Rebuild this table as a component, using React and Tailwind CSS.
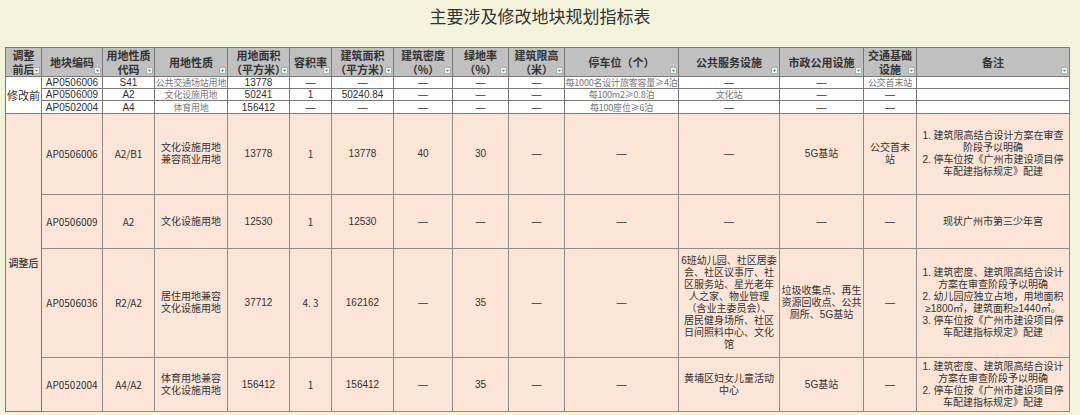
import React from 'react';

const colW = [
  'w-[36px]', 'w-[61px]', 'w-[52px]', 'w-[73px]', 'w-[62px]', 'w-[42px]', 'w-[62px]', 'w-[59px]',
  'w-[56px]', 'w-[56px]', 'w-[114px]', 'w-[101px]', 'w-[84px]', 'w-[53px]', 'w-[153px]',
];

const headers = [
  '调整\n前后', '地块编码', '用地性质\n代码', '用地性质', '用地面积\n（平方米）', '容积率',
  '建筑面积\n（平方米）', '建筑密度\n（%）', '绿地率\n（%）', '建筑限高\n（米）', '停车位（个）',
  '公共服务设施', '市政公用设施', '交通基础\n设施', '备注',
];

const before = [
  ['AP0506006', 'S41', '公共交通场站用地', '13778', '—', '—', '—', '—', '—', '每1000名设计旅客容量≥4泊', '—', '—', '公交首末站', ''],
  ['AP0506009', 'A2', '文化设施用地', '50241', '1', '50240.84', '—', '—', '—', '每100m2≥0.8泊', '文化站', '—', '—', ''],
  ['AP0502004', 'A4', '体育用地', '156412', '—', '—', '—', '—', '—', '每100座位≥6泊', '—', '—', '—', ''],
];
// cells shown in the small gray style in the "before" rows
const grayCols = [2, 9, 10, 12];

const after = [
  {
    h: 'h-[81px]',
    cells: ['AP0506006', 'A2/B1', '文化设施用地\n兼容商业用地', '13778', '1', '13778', '40', '30', '—', '—', '—', '5G基站', '公交首末\n站',
      '1. 建筑限高结合设计方案在审查\n阶段予以明确\n2. 停车位按《广州市建设项目停\n车配建指标规定》配建'],
  },
  {
    h: 'h-[54px]',
    cells: ['AP0506009', 'A2', '文化设施用地', '12530', '1', '12530', '—', '—', '—', '—', '—', '—', '—', '现状广州市第三少年宫'],
  },
  {
    h: 'h-[109px]',
    cells: ['AP0506036', 'R2/A2', '居住用地兼容\n文化设施用地', '37712', '4. 3', '162162', '—', '35', '—', '—',
      '6班幼儿园、社区居委\n会、社区议事厅、社\n区服务站、星光老年\n人之家、物业管理\n（含业主委员会）、\n居民健身场所、社区\n日间照料中心、文化\n馆',
      '垃圾收集点、再生\n资源回收点、公共\n厕所、5G基站', '—',
      '1. 建筑密度、建筑限高结合设计\n方案在审查阶段予以明确\n2. 幼儿园应独立占地，用地面积\n≥1800㎡，建筑面积≥1440㎡。\n3. 停车位按《广州市建设项目停\n车配建指标规定》配建'],
  },
  {
    h: 'h-[54px]',
    cells: ['AP0502004', 'A4/A2', '体育用地兼容\n文化设施用地', '156412', '1', '156412', '—', '35', '—', '—', '黄埔区妇女儿童活动\n中心', '5G基站', '—',
      '1. 建筑密度、建筑限高结合设计\n方案在审查阶段予以明确\n2. 停车位按《广州市建设项目停\n车配建指标规定》配建'],
  },
];
const cjkCols = [0, 1, 4];

const FilterIcon = () => (
  <svg className="absolute bottom-[2px] right-[1px]" width="7" height="7" viewBox="0 0 7 7">
    <rect x="0.5" y="0.5" width="6" height="6" fill="#f4f4f4" stroke="#b0b0b0" />
    <polygon points="1.8,2.8 5.2,2.8 3.5,4.8" fill="#2e9b3c" />
  </svg>
);

export default function App() {
  return (
    <div className="w-[1080px] h-[415px] bg-[#f3f3db] font-['Liberation_Sans','Noto_Sans_CJK_SC',sans-serif] overflow-hidden">
      <div className="h-[47px] pt-[5px] text-center text-[17px] leading-[22px] text-[#333] font-['Noto_Sans_CJK_SC',sans-serif]">
        主要涉及修改地块规划指标表
      </div>
      <table className="ml-[5px] border-collapse table-fixed w-[1064px]">
        <colgroup>
          {colW.map((c, i) => <col key={i} className={c} />)}
        </colgroup>
        <thead>
          <tr className="h-[29px]">
            {headers.map((t, i) => (
              <th key={i} className="relative p-0 bg-[#c0c0c0] border border-[#7a7a7a] text-center align-middle text-[11px] leading-[14px] font-bold text-[#333] whitespace-pre-line font-['Noto_Sans_CJK_SC',sans-serif]">
                {t}
                <FilterIcon />
              </th>
            ))}
          </tr>
        </thead>
        <tbody>
          {before.map((row, r) => (
            <tr key={r} className={r === 2 ? 'h-[13px]' : 'h-[12px]'}>
              {r === 0 && (
                <td rowSpan={3} className="p-0 bg-white border border-[#7a7a7a] text-center align-middle text-[11px] text-[#333] font-['Noto_Sans_CJK_SC',sans-serif]">
                  修改前
                </td>
              )}
              {row.map((v, i) => (
                <td key={i} className={`p-0 bg-white border border-[#7a7a7a] text-center align-middle leading-[11px] whitespace-nowrap ${grayCols.includes(i) && v !== '—' ? "text-[9px] tracking-[-0.2px] text-[#777] font-['Noto_Sans_CJK_SC',sans-serif]" : 'text-[10px] text-[#333]'}`}>
                  {v}
                </td>
              ))}
            </tr>
          ))}
          {after.map((row, r) => (
            <tr key={r} className={row.h}>
              {r === 0 && (
                <td rowSpan={4} className="p-0 bg-[#fce4d6] border border-[#7a7a7a] text-center align-middle text-[10px] font-medium text-[#333] font-['Noto_Sans_CJK_SC',sans-serif]">
                  调整后
                </td>
              )}
              {row.cells.map((v, i) => (
                <td key={i} className={`p-0 bg-[#fce4d6] border border-[#8c8c8c] text-center align-middle text-[10px] leading-[12px] text-[#333] whitespace-pre-line ${cjkCols.includes(i) ? "font-['Noto_Sans_CJK_SC',sans-serif]" : ''}`}>
                  {v}
                </td>
              ))}
            </tr>
          ))}
        </tbody>
      </table>
    </div>
  );
}
